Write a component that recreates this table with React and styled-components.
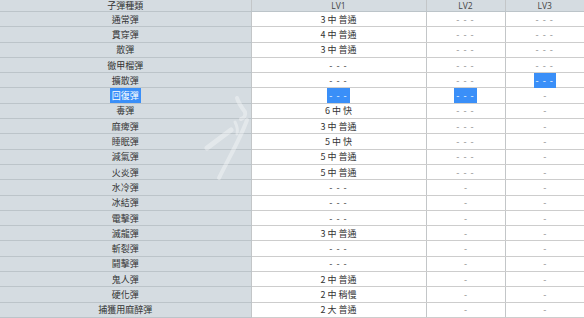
import React from "react";
import styled, { createGlobalStyle } from "styled-components";

const Global = createGlobalStyle`
  html, body { margin: 0; padding: 0; background: #ffffff; }
  body { width: 584px; height: 318px; overflow: hidden; }
`;

const Wrap = styled.div`
  position: relative;
  width: 584px;
  height: 318px;
  overflow: hidden;
`;

const Table = styled.table`
  width: 584px;
  height: 318px;
  border-collapse: collapse;
  table-layout: fixed;
  font-family: "Noto Sans CJK TC", "Noto Sans", sans-serif;
  font-size: 9px;
  color: #333;
`;

const Cell = styled.td`
  text-align: center;
  vertical-align: middle;
  padding: 0;
  line-height: 11px;
  white-space: nowrap;
  background: ${(p) => (p.$gray ? "#d5dce1" : "#ffffff")};
  border-bottom: 1px solid ${(p) => (p.$gray ? "#bcc4c9" : "#cdcdcd")};
  border-left: 1px solid #c3c6c8;
  color: ${(p) => (p.$light ? "#8a8a8a" : "#333")};
  &:first-child { border-left: none; }
`;

const HeadCell = styled(Cell).attrs({ as: "th" })`
  font-weight: normal;
  font-family: "Open Sans", "Noto Sans", sans-serif;
  font-size: 8.5px;
  color: #444;
`;

const HeadLabel = styled.span`
  font-family: "Noto Sans CJK TC", sans-serif;
  font-size: 9px;
  color: #333;
`;

const Sel = styled.span`
  background: #3a8ff8;
  color: #ffffff;
  padding: 1px 2px;
`;

const Dashes = styled.span`
  letter-spacing: 1px;
`;

const Mark = styled.svg`
  position: absolute;
  left: 195px;
  top: 92px;
  width: 60px;
  height: 100px;
  pointer-events: none;
  filter: blur(0.6px);
`;

const rows = [
  ["通常彈", "3 中 普通", "---", "---"],
  ["貫穿彈", "4 中 普通", "---", "---"],
  ["散彈", "3 中 普通", "---", "---"],
  ["徹甲榴彈", "---", "---", "---"],
  ["擴散彈", "---", "---", "!---"],
  ["!回復彈", "!---", "!---", "-"],
  ["毒彈", "6 中 快", "---", "-"],
  ["麻痺彈", "3 中 普通", "---", "-"],
  ["睡眠彈", "5 中 快", "---", "-"],
  ["減氣彈", "5 中 普通", "---", "-"],
  ["火炎彈", "5 中 普通", "---", "-"],
  ["水冷彈", "---", "-", "-"],
  ["冰結彈", "---", "-", "-"],
  ["電擊彈", "---", "-", "-"],
  ["滅龍彈", "3 中 普通", "-", "-"],
  ["斬裂彈", "---", "-", "-"],
  ["鬪擊彈", "---", "-", "-"],
  ["鬼人彈", "2 中 普通", "-", "-"],
  ["硬化彈", "2 中 稍慢", "-", "-"],
  ["捕獲用麻醉彈", "2 大 普通", "-", "-"],
];

function Content({ v }) {
  const sel = v.startsWith("!");
  const t = sel ? v.slice(1) : v;
  const inner = t === "---" ? <Dashes>- - -</Dashes> : t;
  return sel ? <Sel>{inner}</Sel> : inner;
}

export default function App() {
  return (
    <Wrap>
      <Global />
      <Table>
        <colgroup>
          <col style={{ width: 251 }} />
          <col style={{ width: 175 }} />
          <col style={{ width: 79 }} />
          <col style={{ width: 79 }} />
        </colgroup>
        <thead>
          <tr>
            <HeadCell $gray><HeadLabel>子彈種類</HeadLabel></HeadCell>
            <HeadCell $gray>LV1</HeadCell>
            <HeadCell $gray>LV2</HeadCell>
            <HeadCell $gray>LV3</HeadCell>
          </tr>
        </thead>
        <tbody>
          {rows.map((r, i) => (
            <tr key={i}>
              <Cell $gray><Content v={r[0]} /></Cell>
              <Cell><Content v={r[1]} /></Cell>
              <Cell $light><Content v={r[2]} /></Cell>
              <Cell $light><Content v={r[3]} /></Cell>
            </tr>
          ))}
        </tbody>
      </Table>
      <Mark viewBox="0 0 60 100">
        <g fill="none" stroke="#ffffff" strokeOpacity="0.35" strokeLinecap="round">
          <path d="M42 6 C44 12 47 16 50 20 C51 23 49 26 46 27" strokeWidth="4" />
          <path d="M12 56 C20 50 28 44 36 38" strokeWidth="5" />
          <path d="M52 28 C46 45 36 62 24 86" strokeWidth="4" />
          <path d="M40 30 C42 34 43 38 42 42" strokeWidth="3" />
        </g>
      </Mark>
    </Wrap>
  );
}
